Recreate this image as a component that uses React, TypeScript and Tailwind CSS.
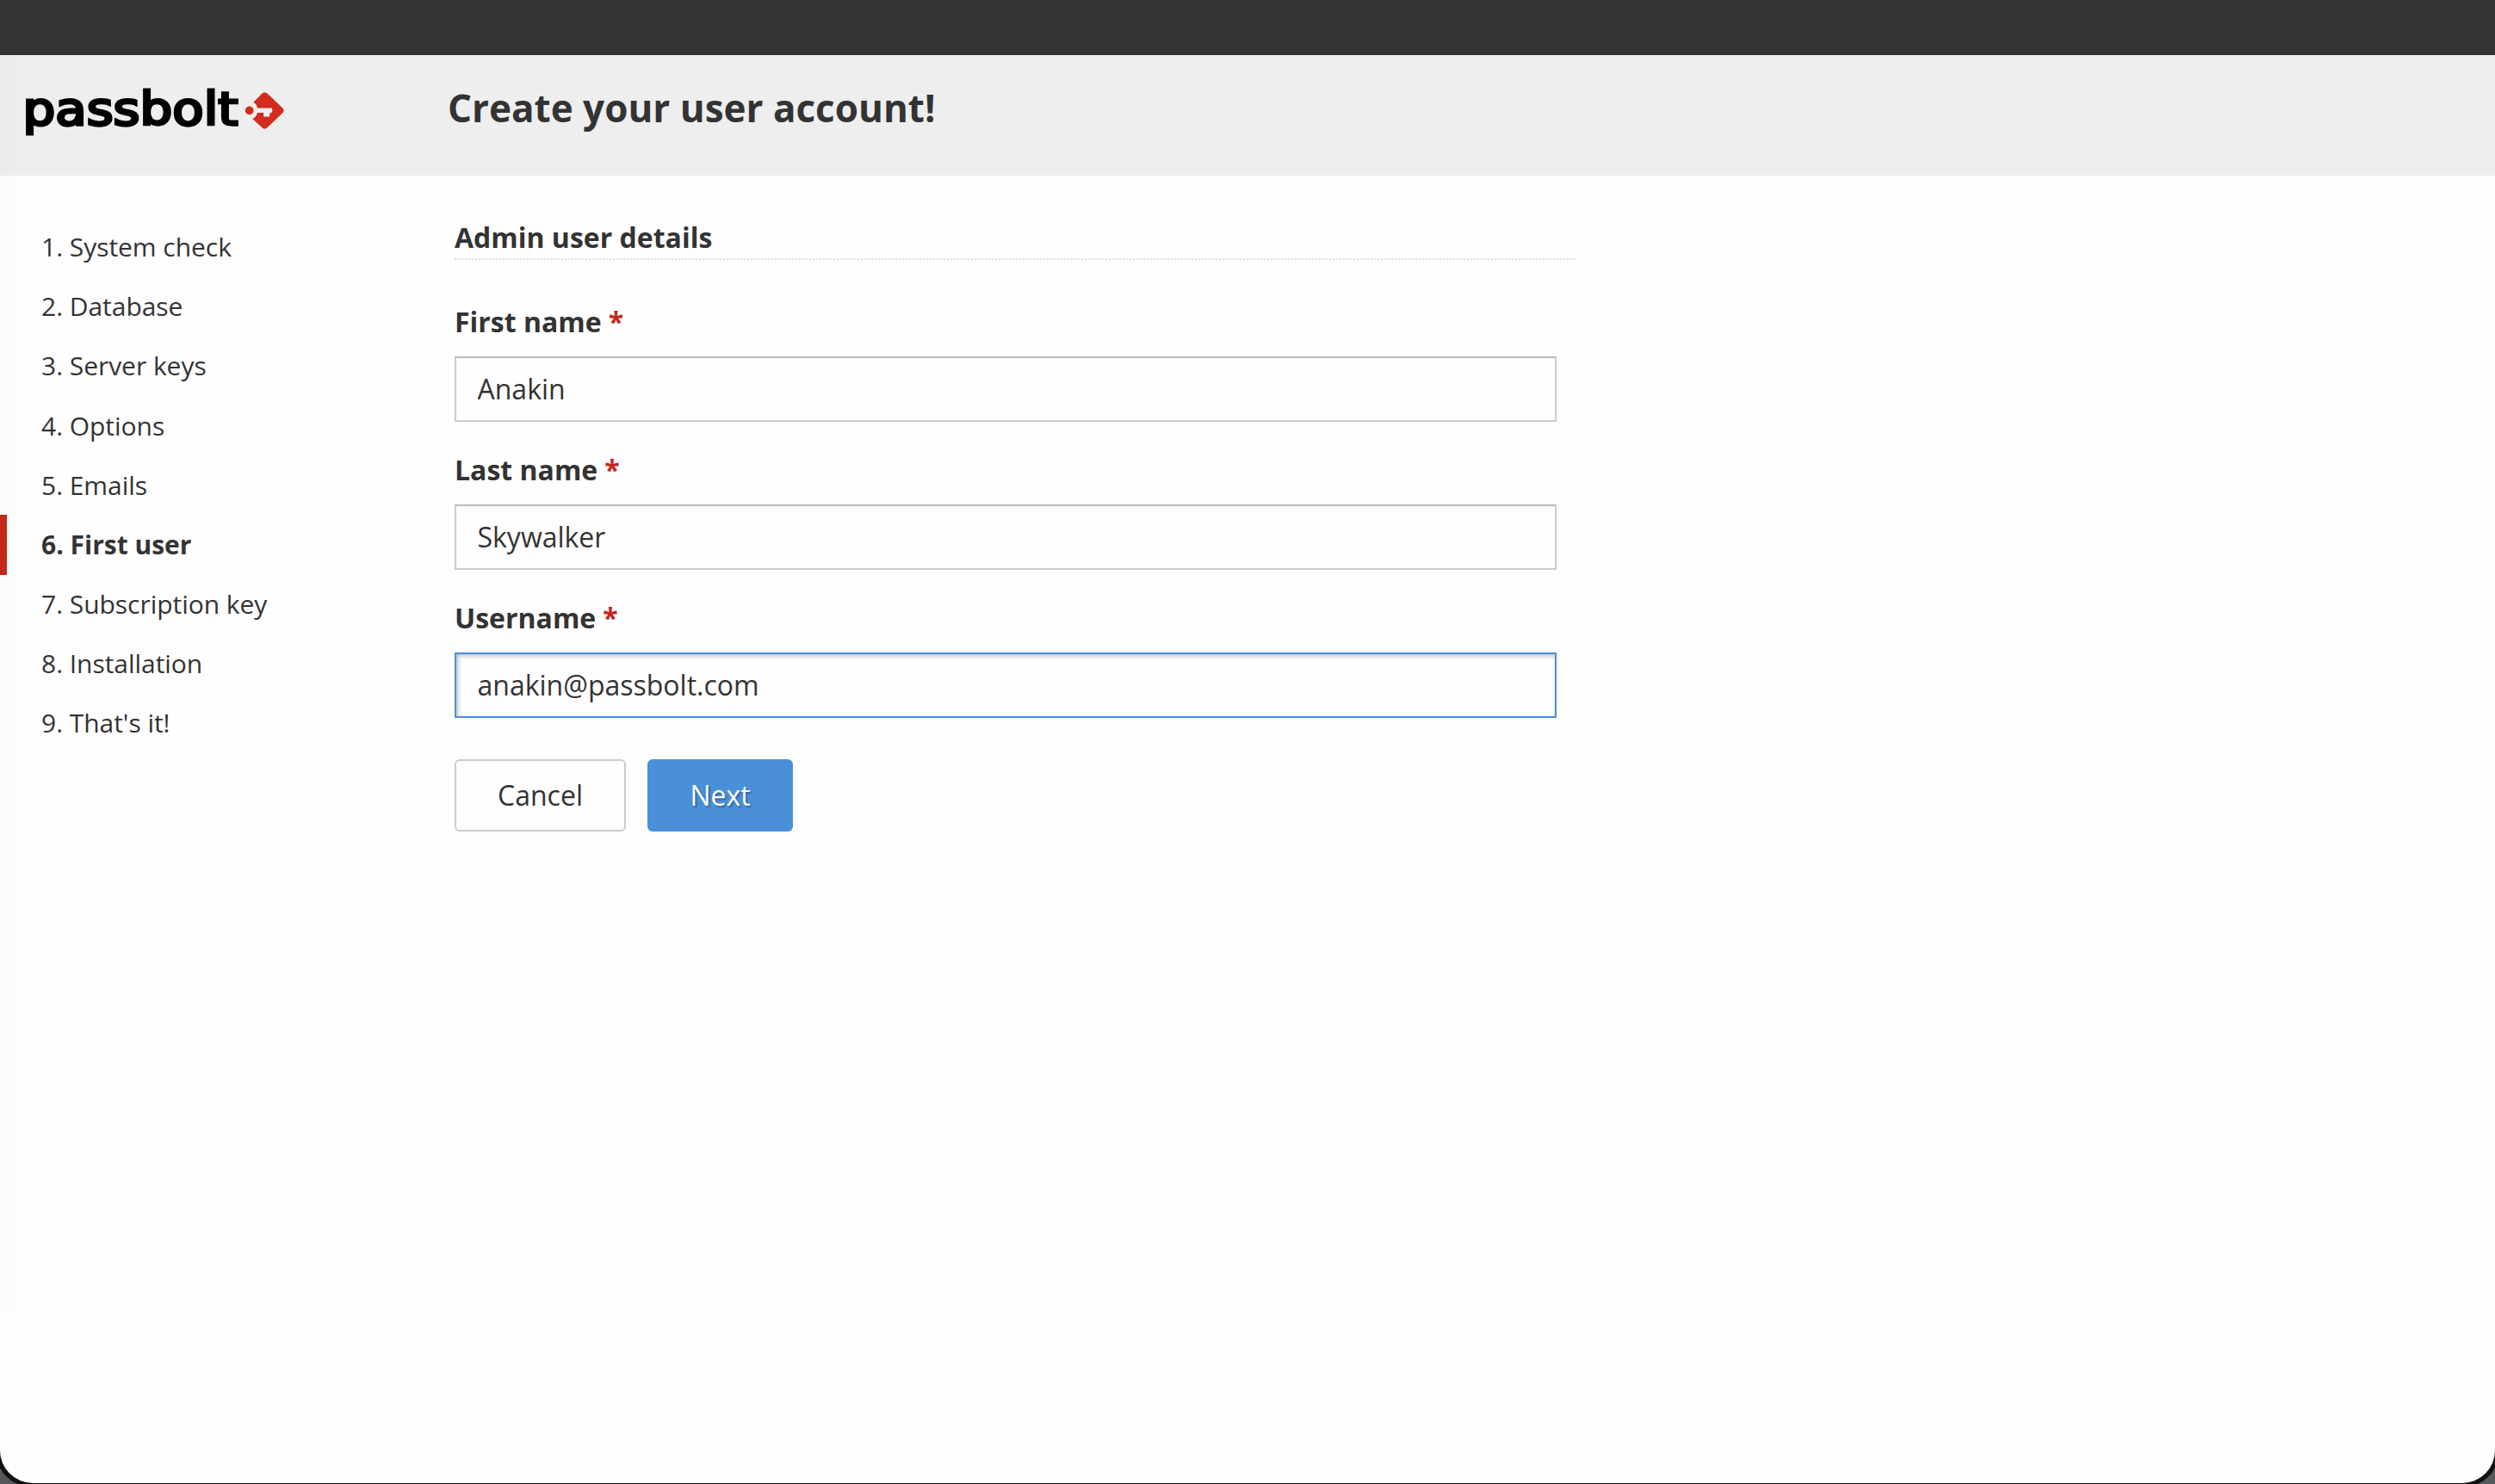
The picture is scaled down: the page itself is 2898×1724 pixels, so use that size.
const steps = [
  "System check",
  "Database",
  "Server keys",
  "Options",
  "Emails",
  "First user",
  "Subscription key",
  "Installation",
  "That's it!",
];

const current = 5;

function Logo() {
  return (
    <svg className="block h-[84px] w-[330px]" viewBox="-10 -12 330 84" role="img" aria-label="passbolt">
      <text
        x="-1.5"
        y="44.2"
        textLength="250"
        lengthAdjust="spacingAndGlyphs"
        fontSize="52.5"
        fontFamily="'DejaVu Sans', sans-serif"
        fill="#000"
        stroke="#000"
        strokeWidth="3.2"
      >
        passbolt
      </text>
      <g transform="translate(1.7 -0.6)">
        <circle cx="260" cy="28" r="4.9" fill="#d22d1e" />
        <path
          d="M264.5 18.5 L274.5 8.3 Q277.7 5.2 281 8.3 L298.3 24.8 Q301.5 28 298.3 31.2 L281 47.7 Q277.7 50.8 274.5 47.7 L263.5 37.5 Q267.5 36.3 269.3 30.5 L276.5 30.5 L276.5 35.2 L283.5 35.2 L283.5 30.8 L285.5 30.8 L286.8 28 L286 25.2 L269.3 25.2 Q268.3 19.5 264.5 18.5 Z"
          fill="#d22d1e"
        />
      </g>
    </svg>
  );
}

function Field({ id, label, value, active = false }: { id: string; label: string; value: string; active?: boolean }) {
  return (
    <div className="mb-[24px] flex flex-col">
      <label htmlFor={id} className="flex h-[72px] items-center gap-[8px] pb-[8px] text-[32px] leading-[44px] font-bold">
        <span>{label}</span>
        <span className="text-[#c3271b]">*</span>
      </label>
      <input
        id={id}
        type="text"
        defaultValue={value}
        className={
          active
            ? "h-[76px] w-[1280px] border-2 border-[#4a90d9] bg-[#fefefe] px-[24.5px] pb-[2px] text-[32px] shadow-[inset_2px_2px_5px_rgba(0,0,0,0.25)] outline-none"
            : "h-[76px] w-[1280px] border-2 border-[#ccc] border-t-[#bbb] bg-[#fefefe] px-[24.5px] pb-[2px] text-[32px] outline-none"
        }
      />
    </div>
  );
}

export default function App() {
  return (
    <div className="h-[1724px] w-[2898px] overflow-hidden bg-[#55585a] font-['Open_Sans',sans-serif] text-[#333]">
      <div className="relative flex h-[1723px] flex-col overflow-hidden rounded-b-[38px] bg-[#fefefe] shadow-[0_0_0_5px_#111]">
        <div className="h-[64px] shrink-0 bg-[#333]" />
        <header className="flex h-[140px] shrink-0 bg-[#eee]">
          <div className="w-[520px] pt-[25px] pl-[18px]">
            <Logo />
          </div>
          <h1 className="pt-[31px] text-[44px] leading-[60px] font-bold">Create your user account!</h1>
        </header>
        <div className="flex grow">
          <nav className="w-[528px] pt-[49px]">
            <ol>
              {steps.map((step, i) => (
                <li
                  key={step}
                  className={
                    i === current
                      ? "flex h-[69.1px] items-center border-l-8 border-[#c3271b] pb-[2px] pl-[40px] text-[30px] font-bold"
                      : "flex h-[69.1px] items-center pb-[1.5px] pl-[48px] text-[30px] tracking-[-0.04px]"
                  }
                >
                  {i + 1}. {step}
                </li>
              ))}
            </ol>
          </nav>
          <main className="w-[1302px] pt-[50px]">
            <h2 className="h-[46px] border-b-2 border-dotted border-[#ddd] box-content text-[32px] leading-[44px] font-bold">
              Admin user details
            </h2>
            <form className="pt-[40px]">
              <Field id="first" label="First name" value="Anakin" />
              <Field id="last" label="Last name" value="Skywalker" />
              <Field id="user" label="Username" value="anakin@passbolt.com" active />
              <div className="flex gap-[25px] pt-[24px] text-[32px]">
                <button type="button" className="h-[84px] w-[199px] rounded-[6px] border-2 border-[#ccc] bg-[#fefefe]">
                  Cancel
                </button>
                <button
                  type="button"
                  className="h-[84px] w-[169px] rounded-[6px] bg-[#4a90d9] text-white [text-shadow:2px_2px_2px_rgba(0,0,0,0.3)]"
                >
                  Next
                </button>
              </div>
            </form>
          </main>
        </div>
        <div className="pointer-events-none absolute top-[64px] left-0 h-[1460px] w-[36px] bg-gradient-to-r from-black/[0.01] to-black/[0.003]" />
      </div>
    </div>
  );
}
